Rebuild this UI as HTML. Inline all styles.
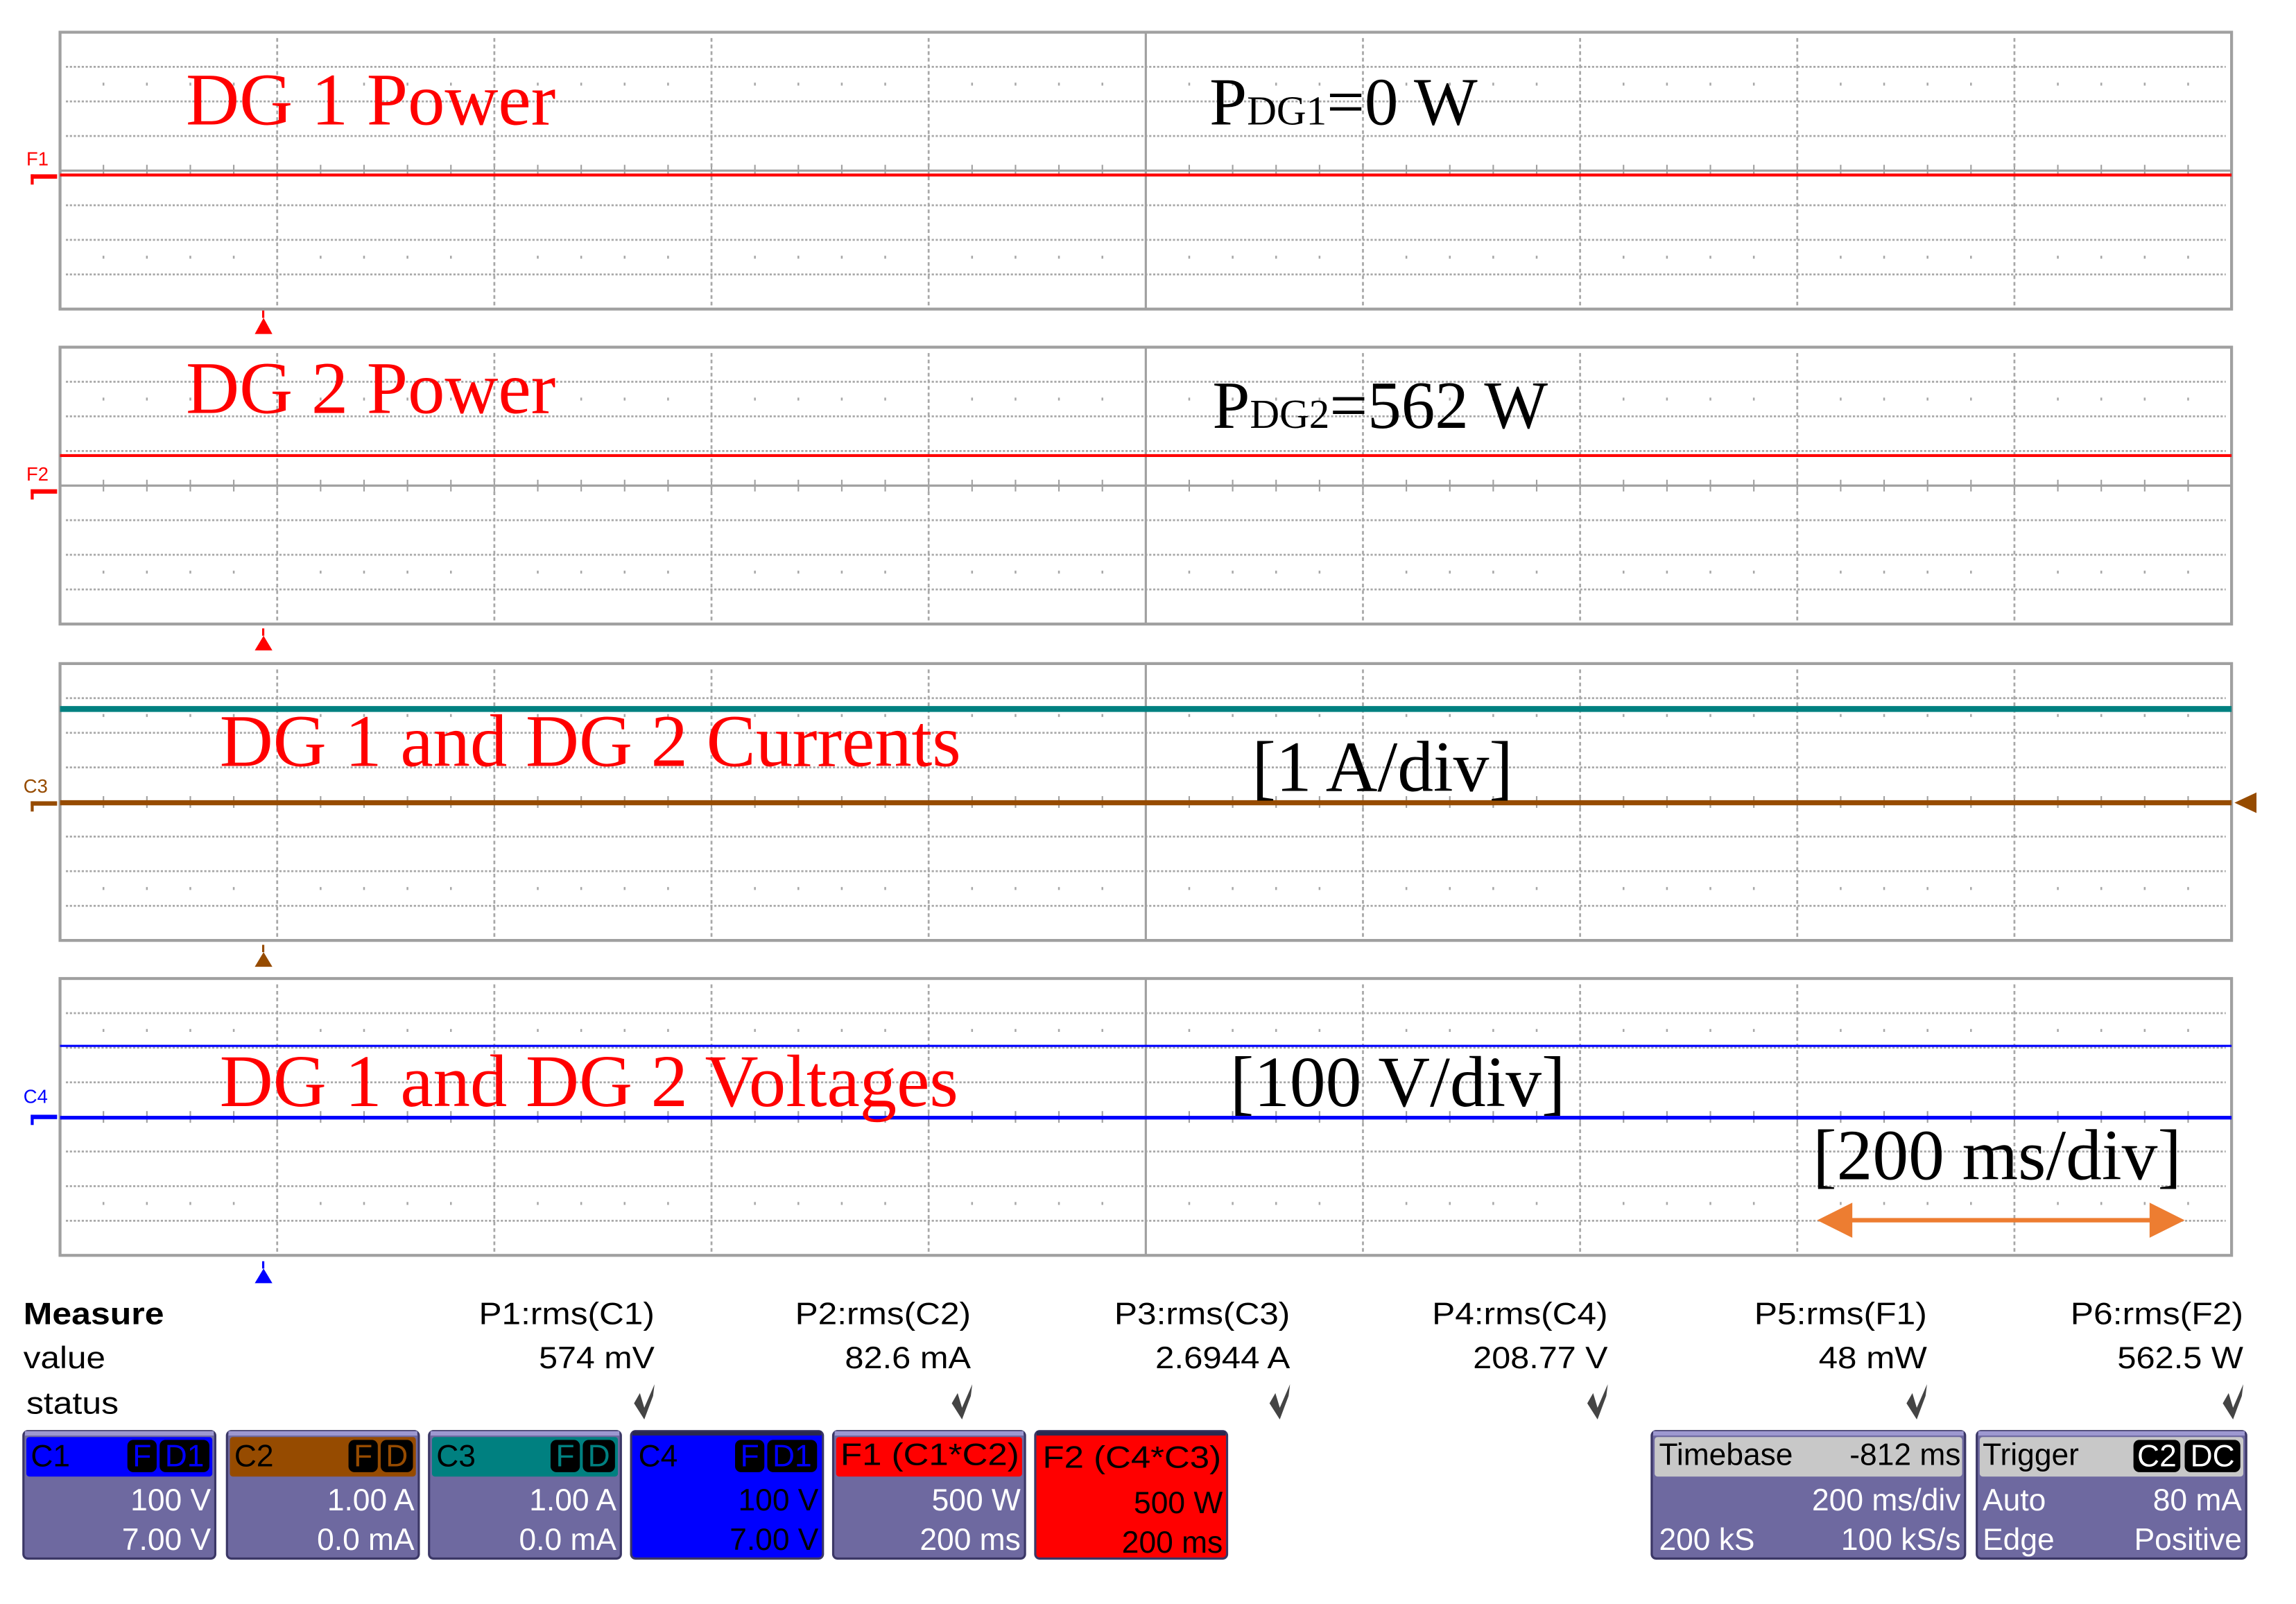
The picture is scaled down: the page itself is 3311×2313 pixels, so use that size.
<!DOCTYPE html>
<html><head><meta charset="utf-8"><style>
html,body{margin:0;padding:0;background:#fff;}
svg{display:block;}
.s{font-family:"Liberation Serif",serif;}
.m{font-family:"Liberation Sans Narrow","Liberation Sans",sans-serif;font-size:21px;}
</style></head><body>
<svg id="sv" width="3311" height="2313" viewBox="0 0 1568 1095" preserveAspectRatio="none" xmlns="http://www.w3.org/2000/svg">
<g id="grid"></g>
<line x1="41" y1="119.5" x2="1524" y2="119.5" stroke="#ff0000" stroke-width="2"/>
<line x1="41" y1="311" x2="1524" y2="311" stroke="#ff0000" stroke-width="2"/>
<line x1="41" y1="484" x2="1524" y2="484" stroke="#008080" stroke-width="4"/>
<line x1="41" y1="548" x2="1524" y2="548" stroke="#964b00" stroke-width="3.5"/>
<polygon points="1526,548 1541,541 1541,555" fill="#964b00"/>
<line x1="41" y1="714" x2="1524" y2="714" stroke="#0000ff" stroke-width="1.5"/>
<line x1="41" y1="763" x2="1524" y2="763" stroke="#0000ff" stroke-width="2.5"/>
<g class="m" style="font-size:13px">
<text x="18" y="113" fill="#ff0000">F1</text>
<rect x="21" y="119" width="18" height="3" fill="#ff0000"/><rect x="21" y="119" width="2" height="7" fill="#ff0000"/>
<text x="18" y="328" fill="#ff0000">F2</text>
<rect x="21" y="334" width="18" height="3" fill="#ff0000"/><rect x="21" y="334" width="2" height="7" fill="#ff0000"/>
<text x="16" y="541" fill="#964b00">C3</text>
<rect x="21" y="547" width="18" height="3" fill="#964b00"/><rect x="21" y="547" width="2" height="7" fill="#964b00"/>
<text x="16" y="753" fill="#0000ff">C4</text>
<rect x="21" y="761" width="18" height="3" fill="#0000ff"/><rect x="21" y="761" width="2" height="7" fill="#0000ff"/>
</g>
<g>
<rect x="179" y="212" width="1.5" height="5" fill="#f00"/><polygon points="180,217 186,228 174,228" fill="#f00"/>
<rect x="179" y="429" width="1.5" height="5" fill="#f00"/><polygon points="180,434 186,444 174,444" fill="#f00"/>
<rect x="179" y="645" width="1.5" height="5" fill="#964b00"/><polygon points="180,650 186,660 174,660" fill="#964b00"/>
<rect x="179" y="861" width="1.5" height="5" fill="#00f"/><polygon points="180,866 186,876 174,876" fill="#00f"/>
</g>
<g class="s" fill="#ff0000" font-size="50.5">
<text x="127" y="85">DG 1 Power</text>
<text x="127" y="282">DG 2 Power</text>
<text x="150" y="523">DG 1 and DG 2 Currents</text>
<text x="150" y="755">DG 1 and DG 2 Voltages</text>
</g>
<g class="s" fill="#000">
<text x="826" y="85" font-size="46">P<tspan font-size="28">DG1</tspan>=0 W</text>
<text x="828" y="292" font-size="46">P<tspan font-size="28">DG2</tspan>=562 W</text>
<text x="855" y="540" font-size="49">[1 A/div]</text>
<text x="840" y="755" font-size="49">[100 V/div]</text>
<text x="1238" y="805" font-size="49">[200 ms/div]</text>
</g>
<g fill="#ed7d31">
<rect x="1255" y="831.5" width="224" height="3"/>
<polygon points="1241,833 1265,821 1265,845"/>
<polygon points="1492,833 1468,821 1468,845"/>
</g>
<g class="m" fill="#000">
<text x="16" y="904" font-weight="bold" textLength="96" lengthAdjust="spacingAndGlyphs">Measure</text>
<text x="16" y="934" textLength="56" lengthAdjust="spacingAndGlyphs">value</text>
<text x="18" y="965" textLength="63" lengthAdjust="spacingAndGlyphs">status</text>
<g text-anchor="end">
<text x="447" y="904" textLength="120" lengthAdjust="spacingAndGlyphs">P1:rms(C1)</text>
<text x="663" y="904" textLength="120" lengthAdjust="spacingAndGlyphs">P2:rms(C2)</text>
<text x="881" y="904" textLength="120" lengthAdjust="spacingAndGlyphs">P3:rms(C3)</text>
<text x="1098" y="904" textLength="120" lengthAdjust="spacingAndGlyphs">P4:rms(C4)</text>
<text x="1316" y="904" textLength="118" lengthAdjust="spacingAndGlyphs">P5:rms(F1)</text>
<text x="1532" y="904" textLength="118" lengthAdjust="spacingAndGlyphs">P6:rms(F2)</text>
<text x="447" y="934" textLength="79" lengthAdjust="spacingAndGlyphs">574 mV</text>
<text x="663" y="934" textLength="86" lengthAdjust="spacingAndGlyphs">82.6 mA</text>
<text x="881" y="934" textLength="92" lengthAdjust="spacingAndGlyphs">2.6944 A</text>
<text x="1098" y="934" textLength="92" lengthAdjust="spacingAndGlyphs">208.77 V</text>
<text x="1316" y="934" textLength="74" lengthAdjust="spacingAndGlyphs">48 mW</text>
<text x="1532" y="934" textLength="86" lengthAdjust="spacingAndGlyphs">562.5 W</text>
</g>
</g>
<g id="checks" fill="#444"></g>
<g id="boxes"></g>
</svg>
<script>
var NS="http://www.w3.org/2000/svg";
function el(p,t,a,txt){var e=document.createElementNS(NS,t);for(var k in a)e.setAttribute(k,a[k]);if(txt!=null)e.textContent=txt;p.appendChild(e);return e;}
var g=document.getElementById('grid');
var L=41,R=1524,W=R-L,H=189,tops=[22,237,453,668];
tops.forEach(function(T){
  el(g,'rect',{x:L,y:T,width:W,height:H,fill:'#fff',stroke:'#a0a0a0','stroke-width':2});
  for(var j=1;j<8;j++){var y=T+j*H/8;
    if(j==4){el(g,'line',{x1:L,y1:y,x2:R,y2:y,stroke:'#a0a0a0','stroke-width':1.5});
      for(var i=1;i<50;i++){var x=L+i*W/50;el(g,'line',{x1:x,y1:y-4,x2:x,y2:y+4,stroke:'#a0a0a0','stroke-width':1});}}
    else el(g,'line',{x1:L+4,y1:y,x2:R-4,y2:y,stroke:'#a8a8a8','stroke-width':1.3,'stroke-dasharray':'1.5 1.2'});
  }
  [1.5,6.5].forEach(function(j){var y=T+j*H/8;for(var i=1;i<50;i++){if(i%5==0)continue;var x=L+i*W/50;el(g,'rect',{x:x-0.6,y:y-1,width:1.2,height:2,fill:'#a8a8a8'});}});
  for(var k=1;k<10;k++){var x=L+k*W/10;
    if(k==5)el(g,'line',{x1:x,y1:T,x2:x,y2:T+H,stroke:'#a0a0a0','stroke-width':1.5});
    else el(g,'line',{x1:x,y1:T+4,x2:x,y2:T+H-2,stroke:'#a8a8a8','stroke-width':1.3,'stroke-dasharray':'2.5 2'});}
});
var ch=document.getElementById('checks');
[443,660,877,1094,1312,1528].forEach(function(x){el(ch,'path',{d:'M'+(x-10)+' 958 L'+(x-6)+' 951 L'+(x-3)+' 961 L'+(x+4)+' 945 L'+(x+3)+' 953 L'+(x-3)+' 969 Z',fill:'#444'});});
var bx=document.getElementById('boxes');
var FF='"Liberation Sans Narrow","Liberation Sans",sans-serif';
function t(x,y,s,fill,anchor,len){var a={x:x,y:y,fill:fill,'font-family':FF,'font-size':21};if(anchor)a['text-anchor']=anchor;if(len){a.textLength=len;a.lengthAdjust='spacingAndGlyphs';}el(bx,'text',a,s);}
function box(x,w,hdr,full){
  el(bx,'rect',{x:x,y:977,width:w,height:87,rx:3,fill:full||'#6e69a0',stroke:'#3b3766','stroke-width':1.5});
  el(bx,'rect',{x:x+1,y:977,width:w-2,height:3,fill:full?'#2a2850':'#9d98d0'});
  if(!full) el(bx,'rect',{x:x+2,y:981,width:w-4,height:27,rx:2,fill:hdr});
}
function badge(x,w,s,c){el(bx,'rect',{x:x,y:983,width:w,height:22,rx:4,fill:'#000'});t(x+w/2,1001,s,c,'middle');}
var cols=[[16,'#0000ff','C1','100 V','7.00 V',null,'#00f',1],[155,'#964b00','C2','1.00 A','0.0 mA',null,'#964b00',0],[293,'#008080','C3','1.00 A','0.0 mA',null,'#008080',0],[431,'#0000ff','C4','100 V','7.00 V','#0000ff','#00f',1]];
cols.forEach(function(c){var x=c[0],w=131;box(x,w,c[1],c[5]);var tc=c[5]?'#000':'#fff';
  t(x+5,1001,c[2],'#000');
  if(c[7]){badge(x+w-60,20,'F',c[6]);badge(x+w-38,34,'D1',c[6]);}else{badge(x+w-48,20,'F',c[6]);badge(x+w-26,22,'D',c[6]);}
  t(x+w-3,1031,c[3],tc,'end');t(x+w-3,1058,c[4],tc,'end');});
box(569,131,'#ff0000');t(574,1000,'F1  (C1*C2)','#000',null,122);t(697,1031,'500 W','#fff','end');t(697,1058,'200 ms','#fff','end');
box(707,131,null,'#ff0000');t(712,1002,'F2  (C4*C3)','#000',null,122);t(835,1033,'500 W','#000','end');t(835,1060,'200 ms','#000','end');
box(1128,214,'#c8c8c8');t(1133,1000,'Timebase','#000');t(1339,1000,'-812 ms','#000','end');t(1339,1031,'200 ms/div','#fff','end');t(1133,1058,'200 kS','#fff');t(1339,1058,'100 kS/s','#fff','end');
box(1350,184,'#c8c8c8');t(1354,1000,'Trigger','#000');badge(1457,32,'C2','#fff');badge(1492,38,'DC','#fff');t(1354,1031,'Auto','#fff');t(1531,1031,'80 mA','#fff','end');t(1354,1058,'Edge','#fff');t(1531,1058,'Positive','#fff','end');
</script>
</body></html>
